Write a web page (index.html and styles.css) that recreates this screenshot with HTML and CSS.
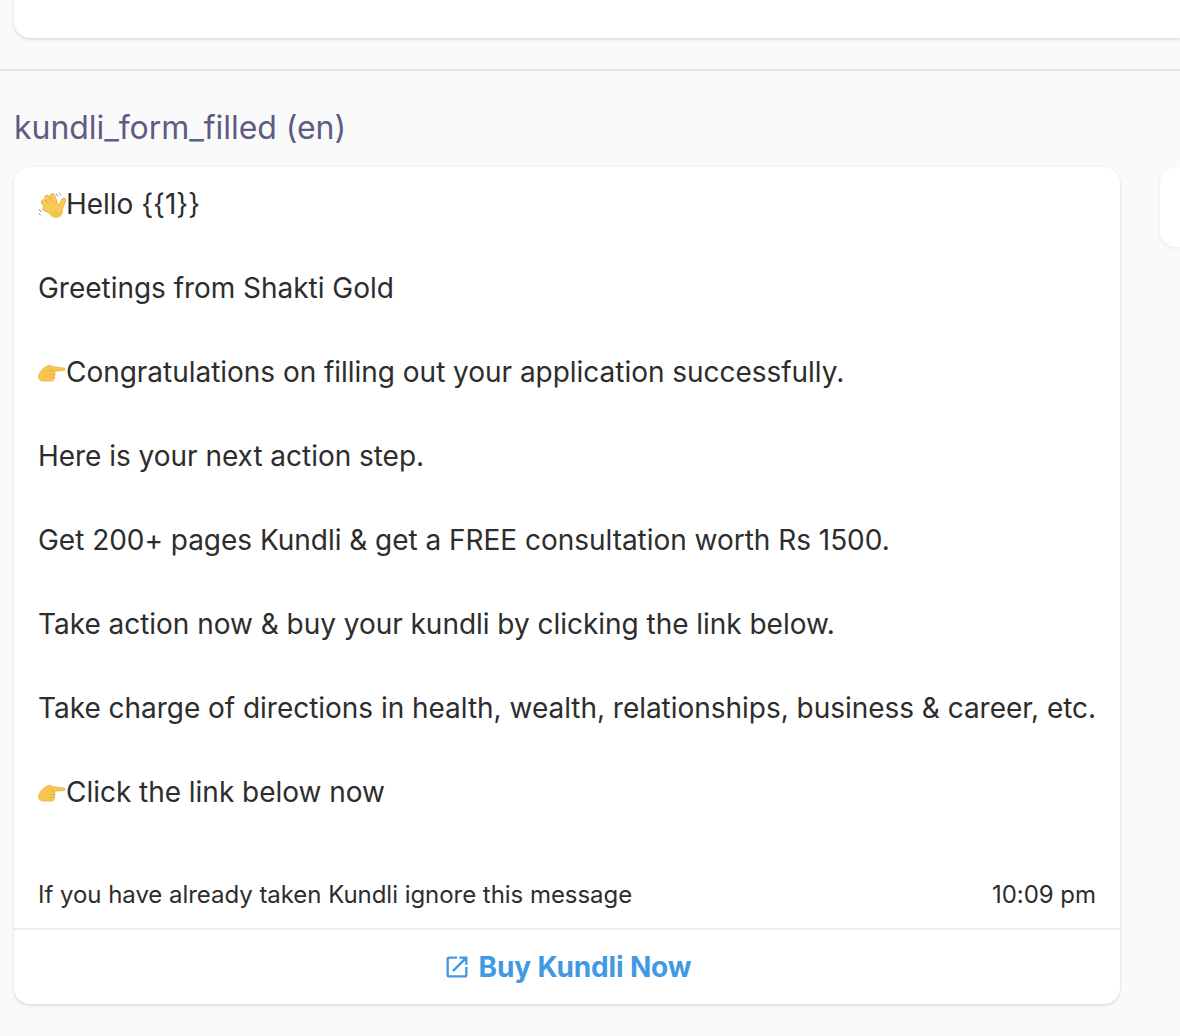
FILE: index.html
```html
<!DOCTYPE html>
<html lang="en">
<head>
<meta charset="utf-8">
<title>kundli_form_filled</title>
<link rel="stylesheet" href="styles.css">
</head>
<body>
<div class="top-card"></div>
<hr class="divider">
<h2 class="template-name">kundli_form_filled (en)</h2>
<div class="row">
  <article class="card">
    <div class="message">
      <p class="line"><svg class="emoji" viewBox="0 0 28 28" aria-hidden="true"><g fill="none" stroke="#e2a53a" stroke-width="5.200" stroke-linecap="round"><path d="M19 17L14.500 5M16 17L9 6.500M14 19L5.500 11M14 21L7 17.500M21 20L25.500 9.500"/></g><circle cx="18" cy="20" r="7" fill="#f5c44c"/><g fill="none" stroke="#f7cb55" stroke-width="4" stroke-linecap="round"><path d="M19 17L14.500 5M16 17L9 6.500M14 19L5.500 11M14 21L7 17.500M21 20L25.500 9.500"/></g><path d="M18 2.500l2 3M21 1.500l2 3M1 18l2 3M.5 22l2.500 2.500" fill="none" stroke="#8f9499" stroke-width="1"/></svg>Hello {{1}}</p>
      <p class="line blank">&nbsp;</p>
      <p class="line">Greetings from Shakti Gold</p>
      <p class="line blank">&nbsp;</p>
      <p class="line"><svg class="emoji" viewBox="0 0 28 28" aria-hidden="true"><path d="M.5 17C2 12 5 9 9 7c2-1 4-1 5 .5l12 1.500c1.500.2 1.500 2.500 0 2.600l-9.500.6c.8 1 .8 2.200.2 3 .5 1 .4 2-.3 2.800.3 1 .1 2-.7 2.600-.3 1-1 1.500-2 1.500H7C3 22.500.5 21 .5 17z" fill="#f6c64f" stroke="#e5a63a" stroke-width=".6"/><path d="M11 10c2 1.500 3.800 2 5.500 2.200M11.500 15.500h5.200M11.500 18.500h5" stroke="#dd9a32" stroke-width=".6" fill="none"/></svg>Congratulations on filling out your application successfully.</p>
      <p class="line blank">&nbsp;</p>
      <p class="line">Here is your next action step.</p>
      <p class="line blank">&nbsp;</p>
      <p class="line">Get 200+ pages Kundli &amp; get a FREE consultation worth Rs 1500.</p>
      <p class="line blank">&nbsp;</p>
      <p class="line">Take action now &amp; buy your kundli by clicking the link below.</p>
      <p class="line blank">&nbsp;</p>
      <p class="line">Take charge of directions in health, wealth, relationships, business &amp; career, etc.</p>
      <p class="line blank">&nbsp;</p>
      <p class="line"><svg class="emoji" viewBox="0 0 28 28" aria-hidden="true"><path d="M.5 17C2 12 5 9 9 7c2-1 4-1 5 .5l12 1.500c1.500.2 1.500 2.500 0 2.600l-9.500.6c.8 1 .8 2.200.2 3 .5 1 .4 2-.3 2.800.3 1 .1 2-.7 2.600-.3 1-1 1.500-2 1.500H7C3 22.500.5 21 .5 17z" fill="#f6c64f" stroke="#e5a63a" stroke-width=".6"/><path d="M11 10c2 1.500 3.800 2 5.500 2.200M11.500 15.500h5.200M11.500 18.500h5" stroke="#dd9a32" stroke-width=".6" fill="none"/></svg>Click the link below now</p>
    </div>
    <div class="footer">
      <span>If you have already taken Kundli ignore this message</span>
      <span>10:09 pm</span>
    </div>
    <a class="action" href="#">
      <svg class="action-icon" viewBox="0 0 24 24" aria-hidden="true"><path d="M19 19H5V5h7V3H5c-1.110 0-2 .9-2 2v14c0 1.100.89 2 2 2h14c1.100 0 2-.9 2-2v-7h-2v7zM14 3v2h3.590l-9.830 9.830 1.410 1.410L19 6.410V10h2V3h-7z"/></svg>
      Buy Kundli Now
    </a>
  </article>
  <div class="side-card"></div>
</div>
</body>
</html>
```
FILE: styles.css
```css
* { box-sizing: border-box; }
html, body { margin: 0; padding: 0; }
body {
  height: 1036px;
  overflow: hidden;
  background: #fafafa;
  font-family: Inter, "Liberation Sans", sans-serif;
  font-optical-sizing: none;
  color: #2d2d2d;
}
.top-card {
  height: 38px;
  margin-left: 14px;
  background: #fff;
  border-bottom-left-radius: 16px;
  box-shadow: 0 2px 3px rgba(60, 60, 40, 0.12), 0 0 3px rgba(0, 0, 0, 0.05);
}
.divider {
  height: 2px;
  margin: 31px 0 0;
  border: 0;
  background: #e2e2e2;
}
.template-name {
  margin: 37px 0 0 14px;
  font-size: 32px;
  line-height: 40px;
  font-weight: 400;
  letter-spacing: -0.05px;
  color: #5c5c85;
}
.row {
  display: flex;
  align-items: flex-start;
  gap: 40px;
  margin: 19px 0 0 14px;
}
.card {
  flex: 0 0 1106px;
  min-width: 0;
  height: 837px;
  display: flex;
  flex-direction: column;
  background: #fff;
  border-radius: 16px;
  box-shadow: 0 2px 3px rgba(60, 60, 40, 0.12), 0 0 3px rgba(0, 0, 0, 0.05);
}
.message {
  flex: 1;
  padding: 16px 24px 0;
}
.line {
  margin: 0;
  font-size: 28px;
  line-height: 42px;
  letter-spacing: -0.03px;
  white-space: nowrap;
}
.emoji {
  width: 28px;
  height: 28px;
  vertical-align: -5px;
}
.footer {
  display: flex;
  justify-content: space-between;
  padding: 0 24px 15px;
  font-size: 24px;
  line-height: 36px;
  letter-spacing: -0.04px;
  border-bottom: 2px solid #ececec;
}
.action {
  height: 74px;
  display: flex;
  align-items: center;
  justify-content: center;
  gap: 8px;
  font-size: 28px;
  font-weight: 700;
  letter-spacing: -0.15px;
  color: #4299e1;
  text-decoration: none;
}
.action-icon {
  width: 28px;
  height: 28px;
  fill: #4299e1;
}
.side-card {
  flex: 1 1 0;
  min-width: 0;
  height: 80px;
  background: #fff;
  border-radius: 16px 0 0 16px;
  box-shadow: 0 1px 4px rgba(0, 0, 0, 0.08);
}
```
